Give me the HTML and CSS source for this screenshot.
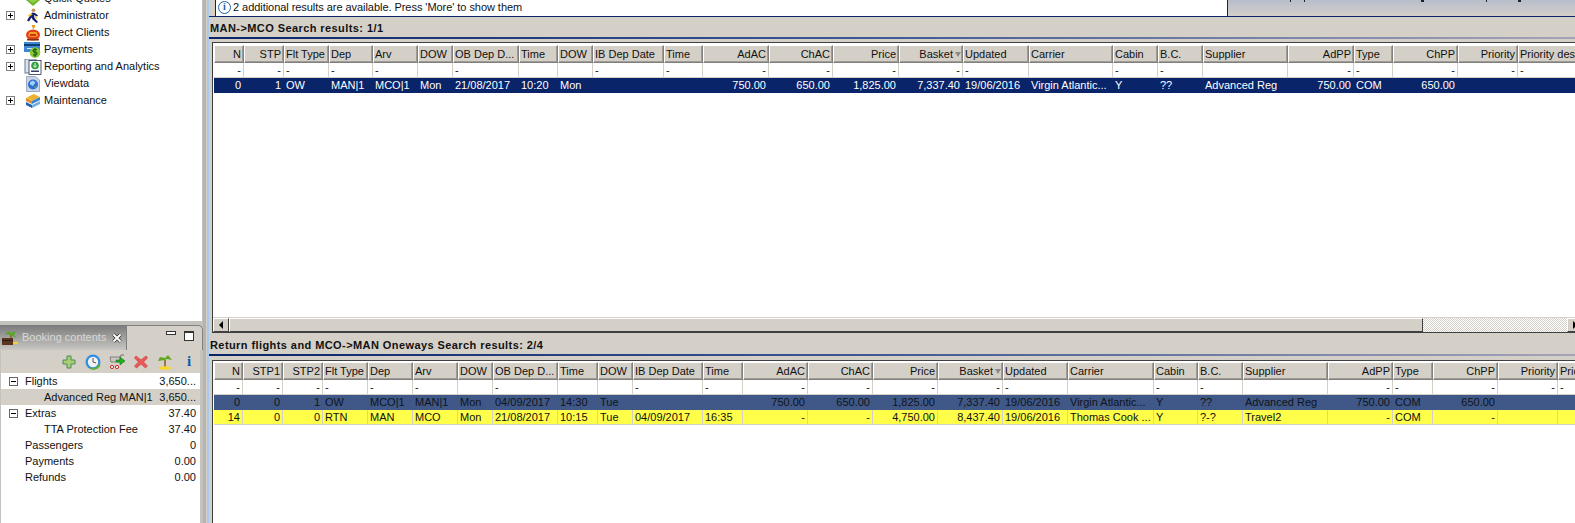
FILE: index.html
```html
<!DOCTYPE html>
<html lang="en">
<head>
<meta charset="utf-8">
<title>Flight search results</title>
<link rel="stylesheet" href="styles.css">
</head>
<body>
<div class="app">
  <aside class="left">
    <nav class="nav">
      <div class="nav-row"><span class="exp-blank"></span><svg class="ico" viewBox="0 0 16 16"><path d="M1 9l7-6 7 6-7 6z" fill="#6fb52c"/><path d="M3 9l5-4 5 4-5 3z" fill="#8ecf4a"/></svg><span>Quick Quotes</span></div>
      <div class="nav-row"><span class="exp"></span><svg class="ico" viewBox="0 0 16 16"><circle cx="8.5" cy="2.2" r="1.8" fill="#c89050"/><path d="M7 4.5l3 .5 3 2.5-1 1-3-1.5.5 3 3.5 4-1.5 1-4-3.5-1-2-2.5 4-2-1 3-5z" fill="#14206e"/><path d="M6.5 5L3 7.5l1 1.5 3.5-2.5z" fill="#e8c020"/><path d="M10 8l2 1v2l-2-1z" fill="#e8d040"/></svg><span>Administrator</span></div>
      <div class="nav-row"><span class="exp-blank"></span><svg class="ico" viewBox="0 0 16 16"><ellipse cx="8" cy="10" rx="7" ry="5.5" fill="#e0401a"/><path d="M4.5 7h7l1.5 4-3 1H6l-3-1z" fill="#f8a020"/><path d="M5 9h6v2H5z" fill="#d03018"/><path d="M7 0h3v2L8.5 4 7 3l1.2-1H7z" fill="#e8a020"/><path d="M2 14h12v1.5H2z" fill="#803010"/></svg><span>Direct Clients</span></div>
      <div class="nav-row"><span class="exp"></span><svg class="ico wide" viewBox="0 0 18 16"><rect x="0" y="0" width="16" height="10" fill="#3c8ad0"/><rect x="0" y="2" width="16" height="2" fill="#123c78"/><path d="M3 6h6v1H3z" fill="#d8e8f8"/><circle cx="11" cy="10.5" r="5.3" fill="#88c838"/><path d="M13 7.5H10l-1 1 1 1.5h2l1 1.5-1 1.5H9M11 6v9" fill="none" stroke="#1a5a10" stroke-width="1.1"/></svg><span>Payments</span></div>
      <div class="nav-row"><span class="exp"></span><svg class="ico wide" viewBox="0 0 18 16"><rect x="1" y="0" width="11" height="14" fill="#dde4ee" stroke="#405a80" stroke-width=".8"/><rect x="5" y="1.500" width="12" height="14" fill="#fff" stroke="#203050" stroke-width=".8"/><circle cx="11" cy="6.500" r="3.800" fill="#30a040"/><path d="M11 4v4M9.500 6.500l1.500 2 1.500-2" stroke="#e0f8e0" fill="none"/><rect x="7" y="11.500" width="8" height="1.500" fill="#304060"/></svg><span>Reporting and Analytics</span></div>
      <div class="nav-row"><span class="exp-blank"></span><svg class="ico" viewBox="0 0 16 16"><path d="M1.500.5h9l4 3.500v11.500h-13z" fill="#c8d4e8" stroke="#8090a8" stroke-width=".7"/><circle cx="8" cy="8.500" r="5" fill="#2f6fd0"/><path d="M5 6l3-1.500 2.500 2-2.500 3.500-3-1.500z" fill="#9fd0f8"/><path d="M9 11l2.500-1-1 2.500z" fill="#70b040"/></svg><span>Viewdata</span></div>
      <div class="nav-row"><span class="exp"></span><svg class="ico" viewBox="0 0 16 16"><path d="M1 5l8-4 6 3-8 4z" fill="#f4c030"/><path d="M3 4.500l6-3M5 5.500l6-3M7 6.500l6-3" stroke="#e09020" stroke-width=".6"/><path d="M1 5l6 3v3L1 8z" fill="#e08a20"/><path d="M7 8l8-4v3l-8 4z" fill="#3a80d0"/><path d="M1 9l6 3v3L1 12z" fill="#2060b0"/><path d="M7 12l8-4v3l-8 4z" fill="#70b0e8"/></svg><span>Maintenance</span></div>
    </nav>
    <section class="booking">
      <div class="tabbar">
        <div class="tab">
          <svg class="tab-ico" viewBox="0 0 16 16"><path d="M9 12V5" stroke="#806020" stroke-width="1.4"/><path d="M9 5L3 4l4-3 2 2 5-2-2 4 3 3-5-2z" fill="#58a828"/><rect x="0" y="8" width="11" height="7" fill="#5a3520"/><rect x="0" y="10" width="11" height="1" fill="#2e1a0c"/><rect x="11" y="12" width="5" height="2" fill="#f0d030"/></svg>
          <span class="tab-label">Booking contents</span>
          <svg class="tab-close" viewBox="0 0 10 10"><path d="M1.500 1.500l7 7M8.500 1.500l-7 7" stroke="#333" stroke-width="3.400"/><path d="M1.500 1.500l7 7M8.500 1.500l-7 7" stroke="#fff" stroke-width="2"/></svg>
        </div>
        <div class="tab-rest">
          <span class="win-min"></span>
          <span class="win-max"></span>
        </div>
      </div>
      <div class="toolbar">
        <svg class="tool" viewBox="0 0 16 16"><path d="M6 2h4v4h4v4h-4v4H6v-4H2V6h4z" fill="#a9cf6e" stroke="#4a8a60"/></svg>
        <svg class="tool" viewBox="0 0 16 16"><circle cx="8" cy="8" r="7.500" fill="#2f8fe0"/><circle cx="8" cy="8" r="5.200" fill="#f2f2f2"/><path d="M8 4v4l3 1" stroke="#555" fill="none"/><path d="M5 13c3 2 7 1 9-3l1.500 1.500c-2 4-7 5-10 3.500z" fill="#60b030"/></svg>
        <svg class="tool" viewBox="0 0 16 16"><path d="M1 3h10v5H2z" fill="#c8c8c0" stroke="#707070" stroke-width=".8"/><path d="M11 3l1-2h3" stroke="#707070" fill="none"/><circle cx="3" cy="13" r="1.600" fill="#fff" stroke="#d02020"/><circle cx="8" cy="13" r="1.600" fill="#fff" stroke="#d02020"/><path d="M7 6h4V3l5 4-5 4V8H7z" fill="#20b020" stroke="#106010" stroke-width=".5"/></svg>
        <svg class="tool" viewBox="0 0 16 16"><path d="M3 2l5 4 5-4 1.500 2-4 4 4 4-2 2-4.500-4-4.500 4-2-2 4-4-4-4z" fill="#ea5a5a" stroke="#c83030" stroke-width=".6"/></svg>
        <svg class="tool" viewBox="0 0 16 16"><path d="M8 13V6" stroke="#906020" stroke-width="1.600"/><path d="M8 6L1 7l2-4 5 1 3-3 4 5-5-1z" fill="#60a820"/><ellipse cx="8" cy="14" rx="6.500" ry="1.800" fill="#f4d830"/></svg>
        <span class="tool-info">i</span>
      </div>
      <div class="sum">
        <div class="sum-row"><span class="sum-exp"></span><span class="sum-label">Flights</span><span class="sum-val">3,650...</span></div>
        <div class="sum-row sum-sel"><span class="sum-label deep">Advanced Reg MAN|1</span><span class="sum-val">3,650...</span></div>
        <div class="sum-row"><span class="sum-exp"></span><span class="sum-label">Extras</span><span class="sum-val">37.40</span></div>
        <div class="sum-row"><span class="sum-label deep">TTA Protection Fee</span><span class="sum-val">37.40</span></div>
        <div class="sum-row"><span class="sum-label plain">Passengers</span><span class="sum-val">0</span></div>
        <div class="sum-row"><span class="sum-label plain">Payments</span><span class="sum-val">0.00</span></div>
        <div class="sum-row"><span class="sum-label plain">Refunds</span><span class="sum-val">0.00</span></div>
      </div>
    </section>
  </aside>
  <div class="sash"></div>
  <main class="main">
    <div class="notice">
      <div class="notice-box"><span class="info-badge">i</span><span class="notice-text">2 additional results are available. Press 'More' to show them</span></div>
      <div class="notice-side"></div>
    </div>

    <div class="title title-a">MAN-&gt;MCO Search results: 1/1</div>
    <div class="rule rule-a"></div>
    <div class="frame frame-a">
      <div class="grid cols-a head">
        <span class="r">N</span><span class="r">STP</span><span>Flt Type</span><span>Dep</span><span>Arv</span><span>DOW</span><span>OB Dep D...</span><span>Time</span><span>DOW</span><span>IB Dep Date</span><span>Time</span><span class="r">AdAC</span><span class="r">ChAC</span><span class="r">Price</span><span class="r sorted">Basket</span><span>Updated</span><span>Carrier</span><span>Cabin</span><span>B.C.</span><span>Supplier</span><span class="r">AdPP</span><span>Type</span><span class="r">ChPP</span><span class="r">Priority</span><span>Priority des</span>
      </div>
      <div class="grid cols-a row">
        <span class="r">-</span><span class="r">-</span><span>-</span><span>-</span><span>-</span><span></span><span>-</span><span></span><span></span><span>-</span><span>-</span><span class="r">-</span><span class="r">-</span><span class="r">-</span><span class="r">-</span><span>-</span><span></span><span>-</span><span>-</span><span></span><span class="r">-</span><span>-</span><span class="r">-</span><span class="r">-</span><span>-</span>
      </div>
      <div class="grid cols-a row sel">
        <span class="r">0</span><span class="r">1</span><span>OW</span><span>MAN|1</span><span>MCO|1</span><span>Mon</span><span>21/08/2017</span><span>10:20</span><span>Mon</span><span></span><span></span><span class="r">750.00</span><span class="r">650.00</span><span class="r">1,825.00</span><span class="r">7,337.40</span><span>19/06/2016</span><span>Virgin Atlantic...</span><span>Y</span><span>??</span><span>Advanced Reg</span><span class="r">750.00</span><span>COM</span><span class="r">650.00</span><span></span><span></span>
      </div>
      <div class="fill"></div>
      <div class="hscroll">
        <span class="sb-btn"><span class="arrow-l"></span></span>
        <span class="sb-thumb"></span>
        <span class="sb-track"></span>
        <span class="sb-btn"><span class="arrow-r"></span></span>
      </div>
    </div>

    <div class="title title-b">Return flights and MCO-&gt;MAN Oneways Search results: 2/4</div>
    <div class="rule rule-b"></div>
    <div class="frame frame-b">
      <div class="grid cols-b head">
        <span class="r">N</span><span class="r">STP1</span><span class="r">STP2</span><span>Flt Type</span><span>Dep</span><span>Arv</span><span>DOW</span><span>OB Dep D...</span><span>Time</span><span>DOW</span><span>IB Dep Date</span><span>Time</span><span class="r">AdAC</span><span class="r">ChAC</span><span class="r">Price</span><span class="r sorted">Basket</span><span>Updated</span><span>Carrier</span><span>Cabin</span><span>B.C.</span><span>Supplier</span><span class="r">AdPP</span><span>Type</span><span class="r">ChPP</span><span class="r">Priority</span><span>Priority des</span>
      </div>
      <div class="grid cols-b row">
        <span class="r">-</span><span class="r">-</span><span class="r">-</span><span>-</span><span>-</span><span>-</span><span></span><span>-</span><span></span><span></span><span>-</span><span>-</span><span class="r">-</span><span class="r">-</span><span class="r">-</span><span class="r">-</span><span>-</span><span></span><span>-</span><span>-</span><span></span><span class="r">-</span><span>-</span><span class="r">-</span><span class="r">-</span><span>-</span>
      </div>
      <div class="grid cols-b row dim">
        <span class="r">0</span><span class="r">0</span><span class="r">1</span><span>OW</span><span>MCO|1</span><span>MAN|1</span><span>Mon</span><span>04/09/2017</span><span>14:30</span><span>Tue</span><span></span><span></span><span class="r">750.00</span><span class="r">650.00</span><span class="r">1,825.00</span><span class="r">7,337.40</span><span>19/06/2016</span><span>Virgin Atlantic...</span><span>Y</span><span>??</span><span>Advanced Reg</span><span class="r">750.00</span><span>COM</span><span class="r">650.00</span><span></span><span></span>
      </div>
      <div class="grid cols-b row hot">
        <span class="r">14</span><span class="r">0</span><span class="r">0</span><span>RTN</span><span>MAN</span><span>MCO</span><span>Mon</span><span>21/08/2017</span><span>10:15</span><span>Tue</span><span>04/09/2017</span><span>16:35</span><span class="r">-</span><span class="r">-</span><span class="r">4,750.00</span><span class="r">8,437.40</span><span>19/06/2016</span><span>Thomas Cook ...</span><span>Y</span><span>?-?</span><span>Travel2</span><span class="r">-</span><span>COM</span><span class="r">-</span><span></span><span></span>
      </div>
    </div>
  </main>
</div>
</body>
</html>
```
FILE: styles.css
```css
* { box-sizing: border-box; }
html, body { margin: 0; padding: 0; background: #d4d0c8; }
body { font: 11px/1 "Liberation Sans", Arial, sans-serif; color: #111; }

.app { display: flex; width: 1575px; height: 523px; overflow: hidden; }

/* left column */
.left { width: 203px; flex: none; display: flex; flex-direction: column; background: #c4c2bc; }
.nav { height: 321px; flex: none; background: #fff; overflow: hidden; margin-right: 1px; }
.nav-row { height: 17px; display: flex; align-items: center; position: relative; top: -10px; padding-left: 6px; white-space: nowrap; }
.exp, .exp-blank { width: 9px; height: 9px; flex: none; margin-right: 10px; }
.exp { border: 1px solid #808080; background:
  linear-gradient(#000, #000) center / 5px 1px no-repeat,
  linear-gradient(#000, #000) center / 1px 5px no-repeat,
  #fff; }
.ico { width: 16px; height: 16px; flex: none; margin-right: 3px; }
.ico.wide { width: 18px; margin-left: -1px; margin-right: 2px; }

.booking { margin-top: 4px; flex: 1; display: flex; flex-direction: column; min-height: 0; }
.tabbar { height: 25px; display: flex; flex: none; }
.tab { width: 129px; display: flex; align-items: center; padding: 0 0 0 2px; background: linear-gradient(#7a7a7a, #c9c7c3); }
.tab-ico { width: 16px; height: 16px; margin-right: 4px; flex: none; }
.tab-label { color: #d8d8d8; width: 90px; white-space: nowrap; }
.tab-close { width: 10px; height: 10px; flex: none; }
.tab-rest { flex: 1; display: flex; gap: 8px; padding: 5px 8px 0 39px; border: 1px solid #808080; border-bottom: 0; border-top-right-radius: 5px; background: #d4d0c8; }
.win-min { width: 10px; height: 4px; border: 1px solid #333; background: #fff; }
.win-max { width: 10px; height: 10px; border: 1px solid #333; border-top-width: 2px; background: #fff; }
.toolbar { height: 23px; flex: none; margin: 0 3px 0 1px; display: flex; align-items: center; justify-content: flex-end; gap: 8px; padding-right: 3px; background: #d4d0c8; }
.tool { width: 16px; height: 16px; flex: none; }
.tool-info { width: 16px; font: bold 15px "Liberation Serif", serif; color: #0b5ea8; text-align: center; }
.sum { flex: 1; background: #fff; margin: 0 3px 0 1px; }
.sum-row { height: 16px; display: flex; align-items: center; padding: 1px 4px 0 0; white-space: nowrap; }
.sum-sel { background: #d4d0c8; }
.sum-exp { width: 9px; height: 9px; flex: none; margin: 0 7px 0 8px; border: 1px solid #666; background: linear-gradient(#000, #000) center / 5px 1px no-repeat, #fff; }
.sum-label { flex: 1; }
.sum-label.plain { padding-left: 24px; }
.sum-label.deep { padding-left: 43px; }
.sum-val { flex: none; text-align: right; }

.sash { width: 6px; flex: none; background: linear-gradient(90deg, #b4b4b0 0 3px, #d4d0c8 3px 4px, #a6caf0 4px); }

/* main area */
.main { flex: 1; min-width: 0; display: flex; flex-direction: column; background: #d4d0c8; }
.notice { height: 17px; flex: none; display: flex; border-bottom: 1px solid #0a246a; padding-left: 6px; }
.notice-box { width: 1013px; display: flex; align-items: center; gap: 2px; background: #fff; border-left: 1px solid #0a246a; border-right: 1px solid #0a246a; padding: 0 0 2px 2px; white-space: nowrap; }
.notice-text { letter-spacing: -.05px; }
.notice-side { flex: 1; background:
  linear-gradient(#222, #222) 62px 0 / 1px 2px no-repeat,
  linear-gradient(#222, #222) 76px 0 / 1px 2px no-repeat,
  linear-gradient(#222, #222) 193px 0 / 3px 2px no-repeat,
  linear-gradient(#222, #222) 258px 0 / 1px 2px no-repeat,
  linear-gradient(#222, #222) 290px 0 / 3px 2px no-repeat,
  linear-gradient(#b8bdcc, #d4d0c8); }
.info-badge { width: 13px; height: 13px; flex: none; border: 1.5px solid #1d63a8; border-radius: 50%; font: bold 10px/10px "Liberation Serif", serif; color: #1d63a8; text-align: center; }

.title { flex: none; font-weight: 700; letter-spacing: .42px; padding-left: 1px; display: flex; align-items: center; white-space: nowrap; }
.title-a { height: 20px; padding-top: 2px; }
.title-b { height: 21px; padding-top: 4px; }
.rule { height: 2px; flex: none; background: linear-gradient(90deg, #0a246a, #3f5a96 50%, #a6a3b8); }
.rule-a { margin-bottom: 3px; }
.rule-b { margin-bottom: 4px; }

.frame { margin-left: 3px; border-top: 1px solid #404040; border-left: 1px solid #404040; background: #fff; display: flex; flex-direction: column; padding-left: 1px; overflow: hidden; }
.frame-a { height: 291px; flex: none; padding-top: 2px; border-bottom: 1px solid #404040; }
.frame-b { flex: 1; padding-top: 1px; }
.fill { flex: 1; }

.grid { display: grid; flex: none; width: max-content; }
.cols-a { grid-template-columns: 30px 40px 45px 44px 45px 35px 66px 39px 35px 71px 39px 66px 64px 66px 64px 66px 84px 45px 45px 85px 66px 39px 65px 60px 80px; }
.cols-b { grid-template-columns: 29px 40px 40px 45px 45px 45px 35px 65px 40px 35px 70px 40px 65px 65px 65px 65px 65px 86px 44px 45px 85px 65px 40px 65px 60px 80px; }
.grid > span { padding: 0 2px; display: flex; align-items: center; overflow: hidden; white-space: nowrap; }
.grid > .r { justify-content: flex-end; }

.head { height: 18px; }
.head > span { background: #d4d0c8; padding-left: 1px; border: 1px solid; border-color: #fff #808080 #808080 #fff; box-shadow: inset -1px -1px 0 #a09c94; }
.sorted::after { content: ""; width: 0; height: 0; margin: 0 -1px 0 2px; border: 3.5px solid transparent; border-top: 5px solid #8a8a86; border-bottom: 0; }

.row { height: 15px; }
.row > span { border-right: 1px solid #d4d0c8; border-bottom: 1px solid #d4d0c8; }
.sel { background: #0a246a; }
.sel > span { color: #fff; border-color: #0a246a; }
.dim { background: #3f5887; }
.dim > span { color: #10141c; border-color: #3f5887; }
.hot { background: #ffff4a; }
.hot > span { color: #111; }

.hscroll { height: 15px; flex: none; display: flex; margin-left: -1px; border-top: 1px solid #d4d0c8; background: #d4d0c8; }
.sb-btn { width: 16px; flex: none; display: flex; align-items: center; justify-content: center; border: 1px solid; border-color: #fff #404040 #404040 #fff; }
.arrow-l { border: 4px solid transparent; border-right: 4px solid #000; border-left: 0; }
.arrow-r { border: 4px solid transparent; border-left: 4px solid #000; border-right: 0; }
.sb-thumb { width: 1194px; flex: none; border: 1px solid; border-color: #fff #404040 #404040 #fff; background: #d4d0c8; }
.sb-track { width: 144px; flex: none; background: repeating-conic-gradient(#d4d0c8 0 25%, #fff 0 50%) 0 0 / 2px 2px; }
```
